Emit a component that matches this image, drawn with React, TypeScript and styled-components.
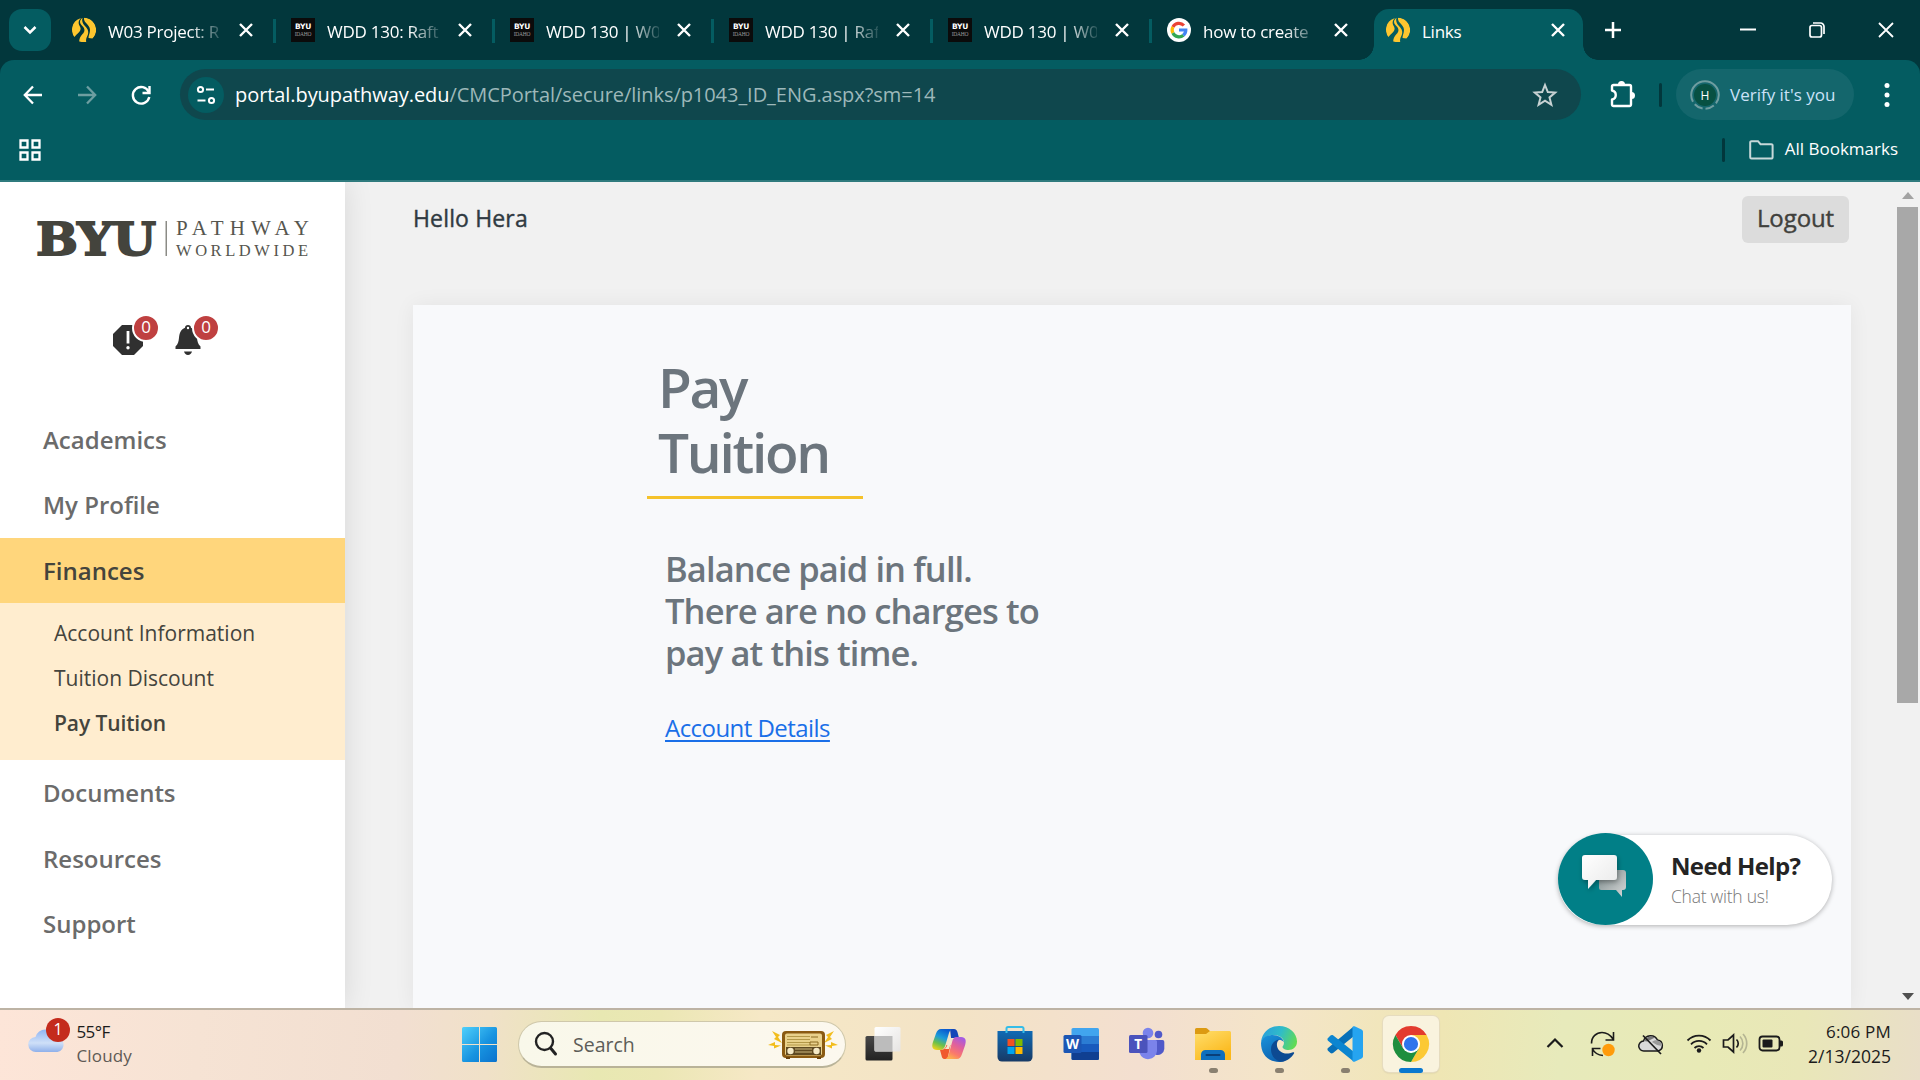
import React from "react";
import styled, { createGlobalStyle } from "styled-components";

const sans = `"Open Sans", "Noto Sans", sans-serif`;

const GlobalStyle = createGlobalStyle`
  * { box-sizing: border-box; }
  body { margin: 0; background: #f1f1f1; font-family: ${sans}; overflow: hidden; }
  svg { display: block; flex: none; overflow: visible; }
`;

const Label = styled.span<{
  $size: number;
  $color: string;
  $spacing?: number;
  $weight?: number;
  $line?: number;
  $left?: number;
  $stroke?: number;
}>`
  font-size: ${(p) => p.$size}px;
  color: ${(p) => p.$color};
  letter-spacing: ${(p) => p.$spacing ?? 0}px;
  font-weight: ${(p) => p.$weight ?? 400};
  line-height: ${(p) => (p.$line ? `${p.$line}px` : "normal")};
  margin-left: ${(p) => p.$left ?? 0}px;
  white-space: nowrap;
  ${(p) => p.$stroke && `-webkit-text-stroke: ${p.$stroke}px ${p.$color};`}
`;

const Screen = styled.div`
  width: 1920px;
  height: 1080px;
  display: flex;
  flex-direction: column;
  overflow: hidden;
`;

/* ---------- Browser chrome ---------- */

const TabStrip = styled.div`
  height: 60px;
  flex: none;
  background: #02373c;
  display: flex;
  padding: 9px 0 0 9px;
`;

const TabSearch = styled.button`
  width: 42px;
  height: 42px;
  margin-right: 9px;
  padding: 0;
  border: 0;
  border-radius: 13px;
  background: #045c61;
  display: grid;
  place-items: center;
`;

const Tab = styled.div<{ $active?: boolean }>`
  position: relative;
  width: ${(p) => (p.$active ? 209 : 219)}px;
  height: 51px;
  padding-left: 12px;
  display: flex;
  align-items: flex-start;
  border-radius: 15px 15px 0 0;
  background: ${(p) => (p.$active ? "#045c61" : "transparent")};
  ${(p) =>
    p.$active &&
    `
    &::before, &::after {
      content: "";
      position: absolute;
      bottom: 0;
      width: 15px;
      height: 15px;
    }
    &::before { left: -15px; background: radial-gradient(circle at 0 0, transparent 14.5px, #045c61 15px); }
    &::after { right: -15px; background: radial-gradient(circle at 100% 0, transparent 14.5px, #045c61 15px); }
  `}
`;

const Favicon = styled.div`
  width: 24px;
  height: 24px;
  margin-top: 9px;
`;

const ByuTile = styled.div`
  width: 24px;
  height: 24px;
  background: #0b0b0b;
  color: #fff;
  display: flex;
  flex-direction: column;
  align-items: center;
  padding-top: 5px;
  font: 900 7.5px/8px "DejaVu Sans", sans-serif;
  letter-spacing: -0.2px;
`;

const ByuTileSub = styled.span`
  font: 400 5.5px/6px "Liberation Serif", serif;
  letter-spacing: -0.2px;
  color: #9a9a9a;
`;

const TabTitle = styled.div<{ $fade: boolean }>`
  width: 113px;
  height: 28px;
  margin: 9px 2px 0 12px;
  overflow: hidden;
  white-space: nowrap;
  font-size: 17px;
  letter-spacing: -0.25px;
  line-height: 28px;
  color: #fff;
  ${(p) => p.$fade && "mask-image: linear-gradient(90deg, #000 82px, transparent 118px);"}
`;

const TabClose = styled.div<{ $active?: boolean }>`
  width: 14px;
  margin: 14px 0 0 ${(p) => (p.$active ? 14 : 16)}px;
`;

const TabDivider = styled.div`
  width: 3px;
  height: 24px;
  margin: 10px 0 0 20px;
  background: #045c61;
`;

const NewTab = styled.div`
  width: 16px;
  margin: 13px 0 0 22px;
`;

const WindowButtons = styled.div`
  display: flex;
  margin: 13px 26px 0 auto;
  gap: 53px;
`;

const Toolbars = styled.div`
  height: 122px;
  flex: none;
  background: #02373c;
`;

const ToolbarSurface = styled.div`
  height: 122px;
  background: #045c61;
  border-radius: 14px 14px 0 0;
  border-bottom: 2px solid #2f7b7e;
`;

const AddressRow = styled.div`
  display: flex;
  align-items: center;
  height: 69px;
  padding: 0 30px 0 21px;
`;

const NavIcons = styled.div`
  display: flex;
  gap: 30px;
  width: 159px;
`;

const Omnibox = styled.div`
  width: 1401px;
  height: 51px;
  border-radius: 26px;
  background: #0f474d;
  display: flex;
  align-items: center;
  padding: 0 23px 0 8px;
`;

const SiteInfo = styled.div`
  width: 36px;
  height: 36px;
  border-radius: 50%;
  background: #045c61;
  display: grid;
  place-items: center;
  margin-right: 11px;
`;

const Extensions = styled.div`
  margin-left: 27px;
`;

const Spacer = styled.div`
  flex: 1;
`;

const VerticalRule = styled.div<{ $left: number; $right: number }>`
  width: 3px;
  height: 24px;
  border-radius: 2px;
  background: #02373c;
  margin: 0 ${(p) => p.$right}px 0 ${(p) => p.$left}px;
`;

const ProfileChip = styled.div`
  width: 178px;
  height: 51px;
  border-radius: 26px;
  background: #14666c;
  display: flex;
  align-items: center;
  padding-left: 14px;
  gap: 10px;
`;

const BookmarkRow = styled.div`
  display: flex;
  align-items: center;
  height: 42px;
  padding: 0 22px 0 19px;
`;

const BookmarksLabel = styled.div`
  margin: 0 0 3px 11px;
  display: flex;
`;

/* ---------- Page ---------- */

const Page = styled.div`
  flex: 1;
  min-height: 0;
  display: flex;
  background: #f1f1f1;
  position: relative;
  overflow: hidden;
`;

const Sidebar = styled.aside`
  width: 345px;
  flex: none;
  background: #fff;
  box-shadow: 0 0 28px rgba(0, 0, 0, 0.11);
  padding-top: 36px;
`;

const LogoSlot = styled.div`
  height: 50px;
  padding-left: 34px;
`;

const Alerts = styled.div`
  display: flex;
  height: 139px;
  padding: 46px 0 0 113px;
  gap: 18px;
`;

const Alert = styled.div`
  position: relative;
  width: 42px;
  padding-top: 11px;
`;

const Badge = styled.span`
  position: absolute;
  left: 19px;
  top: 0;
  width: 28px;
  height: 28px;
  border: 2px solid #fff;
  border-radius: 50%;
  background: #bf4040;
  color: #fff;
  font-size: 17px;
  line-height: 22px;
  text-align: center;
`;

const NavItem = styled.div<{ $active?: boolean }>`
  height: 65.4px;
  padding-left: 43px;
  line-height: 66px;
  font-size: 24px;
  font-weight: 600;
  color: ${(p) => (p.$active ? "#44443d" : "#6b6b6b")};
  background: ${(p) => (p.$active ? "#ffd67c" : "transparent")};
`;

const SubMenu = styled.div`
  height: 157px;
  padding: 8px 0 0 54px;
  background: #ffedcf;
`;

const SubItem = styled.div<{ $active?: boolean }>`
  height: 45px;
  line-height: 45px;
  font-size: 21px;
  font-weight: ${(p) => (p.$active ? 600 : 400)};
  letter-spacing: ${(p) => (p.$active ? -0.1 : 0)}px;
  color: #44443d;
`;

const Main = styled.main`
  flex: 1;
  display: flex;
  flex-direction: column;
  padding: 14px 45px 0 68px;
`;

const Greeting = styled.div`
  display: flex;
  justify-content: space-between;
  height: 47px;
  padding-right: 2px;
  margin-bottom: 62px;
`;

const Logout = styled.button`
  width: 107px;
  height: 47px;
  padding: 0 0 4px;
  border: 0;
  border-radius: 6px;
  background: #dcdcdc;
  font-family: ${sans};
`;

const Panel = styled.section`
  flex: 1;
  background: #f8f9fb;
  box-shadow: 0 0 20px rgba(0, 0, 0, 0.06);
  padding: 49px 0 0 234px;
`;

const Heading = styled.h1`
  width: 216px;
  height: 145px;
  margin: 0 0 49px;
  padding-left: 11px;
  border-bottom: 3px solid #f5c22b;
  font-size: 55px;
  line-height: 65px;
  font-weight: 600;
  letter-spacing: -2.3px;
  color: #6c757d;
`;

const Message = styled.p`
  margin: 0 0 36px 18px;
  font-size: 34.5px;
  line-height: 42px;
  font-weight: 600;
  letter-spacing: -0.88px;
  color: #6c757d;
`;

const MessageLine = styled.span`
  display: block;
  white-space: nowrap;
`;

const DetailsLink = styled.a`
  margin-left: 18px;
  font-size: 24px;
  line-height: 36px;
  letter-spacing: -0.55px;
  color: #1a6fe8;
  text-decoration: underline;
  text-decoration-thickness: 2px;
  text-underline-offset: 3px;
`;

const Scrollbar = styled.div`
  width: 24px;
  display: flex;
  flex-direction: column;
  justify-content: space-between;
  align-items: center;
  padding: 10px 1px 8px 0;
`;

const ScrollThumb = styled.div`
  width: 21px;
  height: 496px;
  margin: 8px 0 auto;
  background: #a8a8a8;
`;

const ChatWidget = styled.div`
  position: absolute;
  left: 1558px;
  top: 653px;
  width: 274px;
  height: 90px;
  display: flex;
  align-items: center;
  border-radius: 45px;
  background: #fff;
  box-shadow: 0 1px 5px rgba(0, 0, 0, 0.3);
`;

const ChatDisc = styled.div`
  width: 95px;
  height: 92px;
  margin: -2px 18px 0 0;
  border-radius: 50%;
  background: #017f87;
  padding: 21px 0 0 23px;
`;

const ChatText = styled.div`
  display: flex;
  flex-direction: column;
  padding-top: 1px;
`;

/* ---------- Taskbar ---------- */

const Taskbar = styled.footer`
  height: 72px;
  flex: none;
  border-top: 2px solid #bdb3a4;
  display: flex;
  background: linear-gradient(
    94deg,
    #fde5d8 0,
    #f6e3d4 200px,
    #f2dfd1 400px,
    #f0e1c8 490px,
    #e8e8b2 600px,
    #ebe7b4 660px,
    #f6e8c6 760px,
    #f3e3c6 960px,
    #f3dfd0 1140px,
    #f4e5c8 1280px,
    #efe6b4 1440px,
    #e7eabb 1560px,
    #e8eab6 1700px,
    #e9e7b8 1800px,
    #e9dec8 1920px
  );
`;

const Weather = styled.div`
  position: relative;
  width: 433px;
  display: flex;
  padding: 18px 0 0 28px;
  gap: 12px;
`;

const WeatherBadge = styled.span`
  position: absolute;
  left: 46px;
  top: 8px;
  width: 24px;
  height: 24px;
  border-radius: 50%;
  background: #c42b1c;
  color: #fff;
  font-size: 16px;
  line-height: 23px;
  text-align: center;
`;

const Stack = styled.div<{ $top: number; $align?: string; $width?: number }>`
  display: flex;
  flex-direction: column;
  align-items: ${(p) => p.$align ?? "flex-start"};
  margin-top: ${(p) => p.$top}px;
  ${(p) => p.$width && `width: ${p.$width}px;`}
`;

const StartSlot = styled.div`
  width: 86px;
  padding: 17px 0 0 29px;
`;

const SearchBox = styled.div`
  width: 328px;
  height: 47px;
  margin: 11px 0 0 -1px;
  border: 1.5px solid #cfc8ab;
  border-bottom: 2px solid #b9b398;
  border-radius: 24px;
  background: linear-gradient(90deg, #f9f8ea, #fcf8ee);
  display: flex;
  align-items: center;
  padding: 0 7px 0 15px;
`;

const Apps = styled.div`
  display: flex;
  margin-left: 4px;
`;

const AppSlot = styled.div`
  width: 66px;
  height: 70px;
  padding: 6px 5px 0;
  display: flex;
  flex-direction: column;
  align-items: center;
`;

const AppTile = styled.div<{ $active?: boolean }>`
  width: 56px;
  height: 56px;
  border-radius: 6px;
  padding-top: 10px;
  display: flex;
  justify-content: center;
  background: ${(p) => (p.$active ? "#f9f3de" : "transparent")};
  box-shadow: ${(p) => (p.$active ? "0 0 0 1px #e6dcbf, 0 1px 2px rgba(0,0,0,.15)" : "none")};
`;

const Indicator = styled.div<{ $wide?: boolean }>`
  width: ${(p) => (p.$wide ? 24 : 9)}px;
  height: 5px;
  margin-top: -4px;
  border-radius: 3px;
  background: ${(p) => (p.$wide ? "#0a78cf" : "#8a8070")};
`;

const Tray = styled.div`
  margin-left: auto;
  display: flex;
  align-items: flex-start;
  padding: 20px 29px 0 0;
`;

const TrayIcon = styled.div<{ $right: number }>`
  margin-right: ${(p) => p.$right}px;
`;

/* ---------- Icons ---------- */

const Pathway = () => (
  <svg width="24" height="24" viewBox="0 0 24 24">
    <clipPath id="disc"><circle cx="12" cy="12" r="12.200" /></clipPath>
    <g clipPath="url(#disc)" fill="#fdc62f">
      <path d="M9.500-.5C3 .5 0 6 0 11.500c0 3.300.8 5.500 2.300 7.500C5 16 8.800 13.500 8.600 10.500 8.400 8 6.300 7 6.700 4c.2-1.500 1.300-3.200 2.800-4.500z" />
      <path d="M10.500-.5C8.500 1.500 7.600 3 8.200 5c.6 2 3.800 3.500 4.200 6.500.4 3-2 4.500-3.400 6.500-1.200 1.800-1.800 3.500-1.800 6h7c-.7-4 1.600-5.500 2-9 .4-3.500-2-5.500-3.700-7.500C10.800 5.500 9.500 3 10.500-.500z" />
      <path d="M12-.5c-.3 3 1 4.500 3 6.500 2.500 2.500 3.500 5 2.800 8-.4 2-1.200 3.500-1.300 6l4 .5c2.200-2 3.700-5 3.700-8.500C24 5 18.500-.5 12-.5z" />
    </g>
  </svg>
);

const Google = () => (
  <svg width="24" height="24" viewBox="0 0 24 24">
    <circle cx="12" cy="12" r="12" fill="#fff" />
    <g fill="none" strokeWidth="3.200">
      <path d="M16.900 7.500A6.800 6.800 0 0 0 5.900 9" stroke="#ea4335" />
      <path d="M5.900 8.900a6.800 6.800 0 0 0 0 6.200" stroke="#fbbc05" />
      <path d="M5.900 15a6.800 6.800 0 0 0 10.500 2.200" stroke="#34a853" />
      <path d="M16.300 17.300A6.800 6.800 0 0 0 18.800 12H12" stroke="#4285f4" />
    </g>
  </svg>
);

const Cross = ({ size = 12, w = 2.4 }: { size?: number; w?: number }) => (
  <svg width={size} height={size} viewBox={`0 0 ${size} ${size}`}>
    <path d={`M1 1L${size - 1} ${size - 1}M${size - 1} 1L1 ${size - 1}`} stroke="#fff" strokeWidth={w} />
  </svg>
);

const Logo = () => (
  <svg width="290" height="50" viewBox="34 218 290 50" fill="#44443d">
    <text x="36" y="255" fontFamily="DejaVu Serif" fontWeight="700" fontSize="45.500" textLength="120" lengthAdjust="spacingAndGlyphs" stroke="#44443d" strokeWidth="1.800">BYU</text>
    <rect x="165.500" y="221" width="1.500" height="35" fill="#8b8b86" />
    <text x="176" y="235.300" fill="#56564f" fontFamily="Liberation Serif" fontSize="21" textLength="133">PATHWAY</text>
    <text x="176" y="256" fill="#56564f" fontFamily="Liberation Serif" fontSize="16.500" textLength="132">WORLDWIDE</text>
  </svg>
);

const ChatBubbles = () => (
  <svg width="48" height="46" viewBox="0 0 48 46">
    <defs>
      <linearGradient id="bubbleBack" x1="0" y1="0" x2="1" y2="1"><stop offset="0.200" stopColor="#8f9c9d" /><stop offset="1" stopColor="#d8d8d8" /></linearGradient>
      <linearGradient id="bubbleFront" x1="0" y1="0" x2="1" y2="1"><stop offset="0" stopColor="#fff" /><stop offset="1" stopColor="#e9e9e9" /></linearGradient>
      <filter id="soft" x="-50%" y="-50%" width="200%" height="200%"><feDropShadow dx="1" dy="2" stdDeviation="2.500" floodOpacity="0.350" /></filter>
    </defs>
    <path d="M21 16h21a3 3 0 0 1 3 3v14a3 3 0 0 1-3 3h-1v7l-6-7H20a2 2 0 0 1-2-2V19z" fill="url(#bubbleBack)" />
    <path filter="url(#soft)" d="M4 1h29a3 3 0 0 1 3 3v19a3 3 0 0 1-3 3H15l-8 9v-9H4a3 3 0 0 1-3-3V4a3 3 0 0 1 3-3z" fill="url(#bubbleFront)" />
  </svg>
);

const Windows = () => (
  <svg width="36" height="36" viewBox="0 0 36 36">
    <linearGradient id="win" gradientUnits="userSpaceOnUse" x1="0" y1="0" x2="36" y2="36"><stop offset="0" stopColor="#4fd0fb" /><stop offset="0.550" stopColor="#1793e0" /><stop offset="1" stopColor="#0a70cc" /></linearGradient>
    <path fill="url(#win)" d="M1.500 0H17v17H0V1.500A1.500 1.500 0 0 1 1.500 0zM18 0H33.500a1.500 1.500 0 0 1 1.500 1.500V17H18zM0 18h17v17H1.500A1.500 1.500 0 0 1 0 33.500zM18 18h17v15.500a1.500 1.500 0 0 1-1.500 1.500H18z" />
  </svg>
);

const Radio = () => (
  <svg width="70" height="32" viewBox="0 0 70 32">
    <g fill="#f2bd1d">
      <path d="M4 3l8 4-2 2 4 6-8-4 2-2zM0 17l7-3v3l6 .5-7 3v-2.500zM66 3l-8 4 2 2-4 6 8-4-2-2zM70 17l-7-3v3l-6 .500 7 3v-2.500z" />
    </g>
    <rect x="14" y="3" width="43" height="27" rx="4" fill="#8a5a12" />
    <path d="M18 29h4v2h-4zM49 29h4v2h-4z" fill="#6b430c" />
    <rect x="17" y="5.500" width="37" height="22" rx="2" fill="#e9d18b" />
    <path d="M19 8.500h23M19 11.500h23M19 14.500h23M19 17h23" stroke="#b39848" strokeWidth="1" />
    <path d="M43 9h7M42 14h8v3h-8z" stroke="#8a6a20" fill="none" strokeWidth="1" />
    <rect x="18" y="19" width="35" height="8" fill="#5f4a22" />
    <path d="M27 21h17M27 24h17" stroke="#a89260" strokeWidth="1.500" />
    <circle cx="22.500" cy="23" r="3.200" fill="#f4e9c6" /><circle cx="48.500" cy="23" r="3.200" fill="#f4e9c6" />
  </svg>
);

const TaskView = () => (
  <svg width="36" height="36" viewBox="0 0 36 36">
    <defs>
      <linearGradient id="tvDark" x1="0" y1="0" x2="0" y2="1"><stop offset="0" stopColor="#484848" /><stop offset="1" stopColor="#222" /></linearGradient>
      <linearGradient id="tvLight" x1="0" y1="0" x2="1" y2="1"><stop offset="0" stopColor="#fff" /><stop offset="1" stopColor="#e6e4e2" /></linearGradient>
    </defs>
    <rect x="0.500" y="10" width="27" height="24.500" rx="1.500" fill="url(#tvDark)" />
    <rect x="9.500" y="1" width="26" height="24.500" rx="1.500" fill="url(#tvLight)" />
    <path d="M9.500 10h18v15.500h-17a1 1 0 0 1-1-1z" fill="#bcbcbc" />
  </svg>
);

const Copilot = () => (
  <svg width="36" height="36" viewBox="0 0 36 36">
    <defs>
      <linearGradient id="cpA" x1="0.600" y1="0" x2="0.200" y2="1"><stop offset="0" stopColor="#0a5bd0" /><stop offset="0.400" stopColor="#1d9cd8" /><stop offset="0.700" stopColor="#6cc04a" /><stop offset="1" stopColor="#f1d21b" /></linearGradient>
      <linearGradient id="cpB" x1="0.800" y1="0" x2="0.300" y2="1"><stop offset="0" stopColor="#a05be8" /><stop offset="0.400" stopColor="#e0609c" /><stop offset="0.750" stopColor="#fb7a6a" /><stop offset="1" stopColor="#fdb04e" /></linearGradient>
    </defs>
    <path d="M19 3h4c2 0 3 1.500 3.600 3.500L28 12h-4c-2 0-3 1-3.600 3z" fill="#1447b8" />
    <path d="M10 3h11c-2 1-2.800 3-3.600 6l-3 10c-1 3.500-2.500 5-5 5H6c-5 0-5.500-4-4-8l3-8.500C6.200 4.500 7.500 3 10 3z" fill="url(#cpA)" />
    <path d="M9 24c3 0 5.500-1 6.500-5h4l-3 14h-3c-2 0-2.500-1.500-3-3.500z" fill="#f0592e" />
    <path d="M26 33H14.500c2-1 2.800-3 3.600-6l3-11c.8-3.500 2-5 4-5H30c5 0 5.500 4 4 8.500L31 28c-1.200 3.500-2.500 5-5 5z" fill="url(#cpB)" />
    <path d="M19 12h4.500c-2 .8-2.800 2.500-3.400 4.500L18 23h-4.500c1.500-.8 2.400-2.500 3-4.500z" fill="#f3e6cd" />
  </svg>
);

const Store = () => (
  <svg width="36" height="36" viewBox="0 0 36 36">
    <linearGradient id="st" x1="0" y1="0" x2="0" y2="1"><stop offset="0" stopColor="#0f6ab4" /><stop offset="1" stopColor="#173a66" /></linearGradient>
    <path d="M9.500 7V2.500A1.500 1.500 0 0 1 11 1h14a1.500 1.500 0 0 1 1.500 1.500V7" fill="none" stroke="#35bde8" strokeWidth="2" />
    <path d="M.5 5h35v26a4.500 4.500 0 0 1-4.500 4.500H5A4.500 4.500 0 0 1 .5 31z" fill="url(#st)" />
    <path d="M9.500 5V7M26.500 5v2" stroke="#35bde8" strokeWidth="2" />
    <path d="M10.500 13h7v7h-7z" fill="#f25022" /><path d="M18.500 13h7v7h-7z" fill="#7fba00" />
    <path d="M10.500 21h7v7h-7z" fill="#00a4ef" /><path d="M18.500 21h7v7h-7z" fill="#ffb900" />
  </svg>
);

const Word = () => (
  <svg width="36" height="36" viewBox="0 0 36 36">
    <rect x="8.500" y="2" width="27.500" height="32" rx="1.500" fill="#41a5ee" />
    <path d="M8.500 10H36v8H8.500z" fill="#2b7cd3" /><path d="M8.500 18H36v8H8.500z" fill="#185abd" />
    <path d="M8.500 26H36v6.500a1.500 1.500 0 0 1-1.500 1.500H10a1.500 1.500 0 0 1-1.500-1.500z" fill="#103f91" />
    <rect x="0.500" y="9" width="18" height="18" rx="1.500" fill="#1b56b4" />
    <text x="9.500" y="23" fill="#fff" fontFamily="Open Sans" fontWeight="700" fontSize="13.500" textAnchor="middle">W</text>
  </svg>
);

const Teams = () => (
  <svg width="36" height="36" viewBox="0 0 36 36">
    <circle cx="29.500" cy="8.500" r="3.800" fill="#5059c9" />
    <path d="M24 14h9.500a1.800 1.800 0 0 1 1.800 1.800V23a6.500 6.500 0 0 1-9 5.500z" fill="#5059c9" />
    <circle cx="19" cy="7" r="5.300" fill="#7b83eb" />
    <path d="M11 14h15.500a1.500 1.500 0 0 1 1.500 1.500V25a9 9 0 0 1-17.500 2z" fill="#7b83eb" />
    <rect x="0" y="9" width="18.500" height="18" rx="1.500" fill="#4b53bc" />
    <text x="9.200" y="23" fill="#fff" fontFamily="Open Sans" fontWeight="700" fontSize="13.500" textAnchor="middle">T</text>
  </svg>
);

const Folder = () => (
  <svg width="36" height="36" viewBox="0 0 36 36">
    <linearGradient id="fo" x1="0" y1="0" x2="0.600" y2="1"><stop offset="0" stopColor="#ffde6c" /><stop offset="1" stopColor="#fbb81b" /></linearGradient>
    <path d="M0 3.500A1.500 1.500 0 0 1 1.500 2H11c1.500 0 3 2.500 4.500 3.500L10 10H0z" fill="#dc9a12" />
    <path d="M0 8h11l4-3h19.500A1.500 1.500 0 0 1 36 6.500V34H0z" fill="url(#fo)" />
    <path d="M6 34v-5.500A4.500 4.500 0 0 1 10.500 24h15a4.500 4.500 0 0 1 4.500 4.500V34z" fill="#0f6fbd" />
    <path d="M11.500 29h13" stroke="#0a3f78" strokeWidth="2" strokeLinecap="round" />
  </svg>
);

const Edge = () => (
  <svg width="36" height="36" viewBox="0 0 36 36">
    <defs>
      <linearGradient id="edTop" x1="0" y1="0.300" x2="1" y2="0.600"><stop offset="0" stopColor="#2a9fdc" /><stop offset="0.500" stopColor="#30bcc8" /><stop offset="1" stopColor="#62db52" /></linearGradient>
      <linearGradient id="edLeft" x1="0" y1="0" x2="0.500" y2="1"><stop offset="0" stopColor="#1a94dc" /><stop offset="1" stopColor="#0d62b0" /></linearGradient>
    </defs>
    <path d="M0 18C0 7 8 0 18 0c10.500 0 18 7.500 18 15.500C36 21 32 24 27.500 24c-3.500 0-6-1.500-6-3 0-1 1.500-1.500 1.500-4.500C23 12 18 9 12.500 9 5 9 0 14 0 18z" fill="url(#edTop)" />
    <path d="M0 17c1-5 5-8 11.500-8 6 0 11 3 11.300 7.500C22 14.500 20 14 18 14c-4 1-5 5-4 9 1.500 6 6.500 9.500 11 11-2 1.500-5 2-7 2C7 36 0 28 0 17z" fill="url(#edLeft)" />
    <path d="M18 13.500c-3 .5-8 3-8 10 0 7 5.500 12 11 12.300 5-.8 9.500-4 12-8.300.5-1-.3-1.500-1-1.200-8.500 3.500-15-.8-16-6.300-.5-3 .5-5 2-6.500z" fill="#0d4a92" />
  </svg>
);

const VsCode = () => (
  <svg width="36" height="36" viewBox="0 0 36 36">
    <path d="M1 22l25-21 1 9L6 27c-.8.700-1.800.600-2.500 0L1 24.700c-.8-.7-.7-2 0-2.700z" fill="#0870b8" />
    <path d="M1 12l2.500-2.500c.7-.7 1.700-.8 2.500-.2L27 26l-1 9L1 14.700c-.8-.7-.7-2 0-2.700z" fill="#0c85d0" />
    <path d="M27.500.300L34.500 3.500c.9.500 1.500 1.200 1.500 2.200v24.600c0 1-.6 1.800-1.500 2.200l-7 3.200c-1 .3-2-.2-2-1.200V1.500c0-1 1-1.500 2-1.200z" fill="#26a4f0" />
  </svg>
);

const Chrome = () => (
  <svg width="36" height="36" viewBox="0 0 36 36">
    <path d="M18 18L2.400 9A18 18 0 0 1 33.600 9z" fill="#e33b2e" />
    <path d="M18 9h15.600A18 18 0 0 1 18 36l7.800-13.500z" fill="#fcc934" />
    <path d="M2.400 9L10.200 22.500 18 18V9z" fill="#e33b2e" />
    <path d="M2.400 9l7.800 13.500L18 27l7.800-4.500L18 36A18 18 0 0 1 2.400 9z" fill="#1e8e3e" />
    <circle cx="18" cy="18" r="9" fill="#fff" /><circle cx="18" cy="18" r="7.100" fill="#2f74ec" />
  </svg>
);

/* ---------- Data ---------- */

const tabs: { title: string; icon: "pathway" | "byu" | "google"; last?: boolean }[] = [
  { title: "W03 Project: R", icon: "pathway" },
  { title: "WDD 130: Raft", icon: "byu" },
  { title: "WDD 130 | W0", icon: "byu" },
  { title: "WDD 130 | Raf", icon: "byu" },
  { title: "WDD 130 | W0", icon: "byu" },
  { title: "how to create", icon: "google", last: true },
];

const apps = [
  { icon: <TaskView /> },
  { icon: <Copilot /> },
  { icon: <Store /> },
  { icon: <Word /> },
  { icon: <Teams /> },
  { icon: <Folder />, open: true },
  { icon: <Edge />, open: true },
  { icon: <VsCode />, open: true },
  { icon: <Chrome />, open: true, active: true },
];

const TabIcon = ({ kind }: { kind: string }) => (
  <Favicon>
    {kind === "pathway" && <Pathway />}
    {kind === "google" && <Google />}
    {kind === "byu" && (
      <ByuTile>
        BYU<ByuTileSub>IDAHO</ByuTileSub>
      </ByuTile>
    )}
  </Favicon>
);

export default function App() {
  return (
    <Screen>
      <GlobalStyle />
      <TabStrip>
        <TabSearch>
          <svg width="14" height="10" viewBox="0 0 14 10"><path d="M1.500 2L7 7.500 12.500 2" fill="none" stroke="#fff" strokeWidth="2.500" /></svg>
        </TabSearch>
        {tabs.map((t, i) => (
          <Tab key={i}>
            <TabIcon kind={t.icon} />
            <TabTitle $fade>{t.title}</TabTitle>
            <TabClose><Cross size={14} /></TabClose>
            {!t.last && <TabDivider />}
          </Tab>
        ))}
        <Tab $active>
          <TabIcon kind="pathway" />
          <TabTitle $fade={false}>Links</TabTitle>
          <TabClose $active><Cross size={14} /></TabClose>
        </Tab>
        <NewTab>
          <svg width="16" height="16" viewBox="0 0 16 16"><path d="M8 0v16M0 8h16" stroke="#fff" strokeWidth="2.500" /></svg>
        </NewTab>
        <WindowButtons>
          <svg width="16" height="16" viewBox="0 0 16 16"><path d="M0 7.500h16" stroke="#fff" strokeWidth="2" /></svg>
          <svg width="16" height="16" viewBox="0 0 16 16"><g fill="none" stroke="#fff" strokeWidth="1.700"><rect x="1" y="3.500" width="11.500" height="11.500" rx="2" /><path d="M4 1h7.500A3.500 3.500 0 0 1 15 4.500V12" /></g></svg>
          <Cross size={16} w={1.8} />
        </WindowButtons>
      </TabStrip>

      <Toolbars>
        <ToolbarSurface>
          <AddressRow>
            <NavIcons>
              <svg width="24" height="24" viewBox="0 0 24 24"><path d="M21 12H4M12 3.500L3.800 12l8.200 8.500" fill="none" stroke="#fff" strokeWidth="2.300" /></svg>
              <svg width="24" height="24" viewBox="0 0 24 24"><path d="M3 12h17M12 3.500l8.200 8.500-8.200 8.500" fill="none" stroke="#6d9ea1" strokeWidth="2.300" /></svg>
              <svg width="24" height="24" viewBox="0 0 24 24"><path d="M19.800 9A8.300 8.300 0 1 0 20.300 14" fill="none" stroke="#fff" strokeWidth="2.400" /><path d="M20.500 3v7h-7" fill="none" stroke="#fff" strokeWidth="2.400" /></svg>
            </NavIcons>
            <Omnibox>
              <SiteInfo>
                <svg width="20" height="20" viewBox="0 0 20 20"><g fill="none" stroke="#fff" strokeWidth="2"><circle cx="4.500" cy="4.500" r="2.600" /><path d="M10 4.500h8M1.500 15.500h8" /><circle cx="15.500" cy="15.500" r="2.600" /></g></svg>
              </SiteInfo>
              <Label $size={20} $color="#fff" $spacing={-0.07}>portal.byupathway.edu</Label>
              <Label $size={20} $color="#9db8ba" $spacing={-0.05}>/CMCPortal/secure/links/p1043_ID_ENG.aspx?sm=14</Label>
              <Spacer />
              <svg width="26" height="26" viewBox="0 0 26 26"><path d="M13 3l2.800 7.100 7.400.5-5.700 4.800 1.900 7.400L13 18.700l-6.400 4.100 1.900-7.400-5.700-4.800 7.400-.5z" fill="none" stroke="#c7d2d3" strokeWidth="2" /></svg>
            </Omnibox>
            <Extensions>
              <svg width="28" height="28" viewBox="0 0 28 28"><path d="M4 9.500V5.500A1.500 1.500 0 0 1 5.500 4h16A1.500 1.500 0 0 1 23 5.500v18a1.500 1.500 0 0 1-1.500 1.500h-16A1.500 1.500 0 0 1 4 23.500v-5c5-1 5-8 0-9z" fill="none" stroke="#fff" strokeWidth="2.400" strokeLinejoin="round" /><path d="M10 3.500a3.500 3.500 0 0 1 7 0zM23.500 11a3.500 3.500 0 0 1 0 7z" fill="#fff" /></svg>
            </Extensions>
            <VerticalRule $left={23} $right={14} />
            <ProfileChip>
              <svg width="30" height="30" viewBox="0 0 30 30"><ellipse cx="15" cy="15" rx="13.800" ry="13.800" fill="none" stroke="#6f9da0" strokeWidth="2" strokeDasharray="9 3 9 3 9 3 50 0" /><circle cx="15" cy="15" r="11" fill="#075042" /><text x="15" y="20" fill="#fff" fontFamily="Open Sans" fontSize="12" textAnchor="middle">H</text></svg>
              <Label $size={17} $color="#cbe2f8">Verify it's you</Label>
            </ProfileChip>
            <Spacer />
            <svg width="6" height="26" viewBox="0 0 6 26" fill="#fff"><circle cx="3" cy="3.500" r="2.500" /><circle cx="3" cy="13" r="2.500" /><circle cx="3" cy="22.500" r="2.500" /></svg>
          </AddressRow>
          <BookmarkRow>
            <svg width="22" height="22" viewBox="0 0 22 22"><path d="M1.500 1.500h7v7h-7zM13.500 1.500h7v7h-7zM1.500 13.500h7v7h-7zM13.500 13.500h7v7h-7z" fill="none" stroke="#fff" strokeWidth="2.300" /></svg>
            <Spacer />
            <VerticalRule $left={0} $right={24} />
            <svg width="25" height="20" viewBox="0 0 25 20"><path d="M2.500 1.200h6.500l2.500 3h10.800a1.300 1.300 0 0 1 1.300 1.300v11.800a1.300 1.300 0 0 1-1.300 1.300H2.500a1.300 1.300 0 0 1-1.300-1.300V2.500a1.300 1.300 0 0 1 1.300-1.300z" fill="none" stroke="#c7d8d9" strokeWidth="2" /></svg>
            <BookmarksLabel>
              <Label $size={17} $color="#fff">All Bookmarks</Label>
            </BookmarksLabel>
          </BookmarkRow>
        </ToolbarSurface>
      </Toolbars>

      <Page>
        <Sidebar>
          <LogoSlot><Logo /></LogoSlot>
          <Alerts>
            <Alert>
              <svg width="30" height="30" viewBox="0 0 30 30"><path d="M9 0h12l9 9v12l-9 9H9l-9-9V9z" fill="#303030" /><path d="M15 6v12.500" stroke="#fff" strokeWidth="2.800" /><circle cx="15" cy="22.800" r="1.700" fill="#fff" /></svg>
              <Badge>0</Badge>
            </Alert>
            <Alert>
              <svg width="30" height="30" viewBox="0 0 30 30"><path d="M15 0a3 3 0 0 1 3 2.800c4 1.600 5.500 5 6 10 .4 4 1 6.500 3.500 8.700V24h-25v-2.500C5 19.300 5.600 16.800 6 12.800c.500-5 2-8.400 6-10A3 3 0 0 1 15 0zM11 26.500h8c-.7 2.300-2 3.500-4 3.500s-3.300-1.200-4-3.500z" fill="#303030" /><circle cx="15" cy="3" r="1.200" fill="#fff" /></svg>
              <Badge>0</Badge>
            </Alert>
          </Alerts>
          <NavItem>Academics</NavItem>
          <NavItem>My Profile</NavItem>
          <NavItem $active>Finances</NavItem>
          <SubMenu>
            <SubItem>Account Information</SubItem>
            <SubItem>Tuition Discount</SubItem>
            <SubItem $active>Pay Tuition</SubItem>
          </SubMenu>
          <NavItem>Documents</NavItem>
          <NavItem>Resources</NavItem>
          <NavItem>Support</NavItem>
        </Sidebar>

        <Main>
          <Greeting>
            <Label $size={23} $color="#303a42" $spacing={0.15} $stroke={0.4} $line={44}>Hello Hera</Label>
            <Logout><Label $size={24} $color="#40403c" $spacing={-0.1} $stroke={0.4}>Logout</Label></Logout>
          </Greeting>
          <Panel>
            <Heading>Pay<br />Tuition</Heading>
            <Message>
              <MessageLine>Balance paid in full.</MessageLine>
              <MessageLine>There are no charges to</MessageLine>
              <MessageLine>pay at this time.</MessageLine>
            </Message>
            <DetailsLink>Account Details</DetailsLink>
          </Panel>
        </Main>

        <Scrollbar>
          <svg width="12" height="7" viewBox="0 0 12 7"><path d="M6 0l6 7H0z" fill="#a3a3a3" /></svg>
          <ScrollThumb />
          <svg width="12" height="7" viewBox="0 0 12 7"><path d="M6 7l6-7H0z" fill="#505050" /></svg>
        </Scrollbar>

        <ChatWidget>
          <ChatDisc><ChatBubbles /></ChatDisc>
          <ChatText>
            <Label $size={24} $weight={700} $color="#242424" $line={32} $spacing={-0.65}>Need Help?</Label>
            <Label $size={17.5} $weight={300} $color="#777" $line={29} $spacing={-0.25}>Chat with us!</Label>
          </ChatText>
        </ChatWidget>
      </Page>

      <Taskbar>
        <Weather>
          <svg width="37" height="24" viewBox="0 0 37 24">
            <linearGradient id="cl" x1="0" y1="0" x2="0" y2="1"><stop offset="0" stopColor="#8fb4f2" /><stop offset="0.600" stopColor="#cfe0f8" /><stop offset="1" stopColor="#8fb0ea" /></linearGradient>
            <path d="M8 24a7.500 7.500 0 0 1-.5-15A10 10 0 0 1 27 9.500a7.300 7.300 0 0 1 2.500 14.500z" fill="url(#cl)" />
          </svg>
          <WeatherBadge>1</WeatherBadge>
          <Stack $top={-8}>
            <Label $size={17} $color="#1b1b1b" $line={24} $left={-0.5} $spacing={-0.6}>55°F</Label>
            <Label $size={17} $color="#5f5a55" $line={24} $left={-0.5} $spacing={0.15}>Cloudy</Label>
          </Stack>
        </Weather>
        <StartSlot><Windows /></StartSlot>
        <SearchBox>
          <svg width="24" height="26" viewBox="0 0 24 26"><circle cx="10.500" cy="10.500" r="8.500" fill="none" stroke="#222" strokeWidth="2.400" /><path d="M16.500 17l5 6" stroke="#222" strokeWidth="3" strokeLinecap="round" /></svg>
          <Label $left={15} $size={19.5} $color="#5d5d58">Search</Label>
          <Spacer />
          <Radio />
        </SearchBox>
        <Apps>
          {apps.map((a, i) => (
            <AppSlot key={i}>
              <AppTile $active={a.active}>{a.icon}</AppTile>
              {a.open && <Indicator $wide={a.active} />}
            </AppSlot>
          ))}
        </Apps>
        <Tray>
          <TrayIcon $right={26}>
            <svg width="18" height="26" viewBox="0 0 18 26"><path d="M1.500 17L9 9.500l7.500 7.500" fill="none" stroke="#1b1b1b" strokeWidth="2.200" /></svg>
          </TrayIcon>
          <TrayIcon $right={22}>
            <svg width="26" height="28" viewBox="0 0 26 28"><g fill="none" stroke="#1b1b1b" strokeWidth="1.600"><path d="M1.500 13.500C1.500 6.500 6.500 2.500 12 2.500c4.500 0 8 2 11 6.500M23.500 2v8h-8M13 25.500C8 25 4.500 23 2.500 19M2.500 26v-7.500h8" /></g><circle cx="18.500" cy="20" r="6.200" fill="#ff9b0a" /></svg>
          </TrayIcon>
          <TrayIcon $right={22}>
            <svg width="26" height="26" viewBox="0 0 26 26"><path d="M6 21a5 5 0 0 1-.5-10A7.500 7.500 0 0 1 19.500 10a5.600 5.600 0 0 1 .5 11z" fill="#d9d9d9" stroke="#1b1b1b" strokeWidth="1.500" /><path d="M6 11c2-4 7-6 11-3.500l-8 4z" fill="#777" /><path d="M14 12c3-3 8-2 10 2v2l-5-1z" fill="#9a9a9a" /><path d="M5 5.500L23 24" stroke="#1b1b1b" strokeWidth="1.700" /></svg>
          </TrayIcon>
          <TrayIcon $right={10}>
            <svg width="26" height="26" viewBox="0 0 26 26"><g fill="none" stroke="#1b1b1b" strokeWidth="1.800"><path d="M1.500 10.500a16 16 0 0 1 23 0M5 14.300a11 11 0 0 1 16 0M8.500 18a6.300 6.300 0 0 1 9 0" /></g><circle cx="13" cy="20.500" r="2.200" fill="#1b1b1b" /></svg>
          </TrayIcon>
          <TrayIcon $right={10}>
            <svg width="26" height="26" viewBox="0 0 26 26"><g fill="none" stroke="#1b1b1b" strokeWidth="1.700"><path d="M1.500 10h4.500l5.500-5v17L6 17H1.500z" /><path d="M14.500 9.500a5.500 5.500 0 0 1 0 8" /><path d="M18 6.500a10 10 0 0 1 0 14M21 4a14 14 0 0 1 0 19" stroke="#b5b593" /></g></svg>
          </TrayIcon>
          <TrayIcon $right={0}>
            <svg width="26" height="26" viewBox="0 0 26 26"><rect x="1.500" y="6.500" width="20" height="14" rx="3" fill="none" stroke="#1b1b1b" strokeWidth="1.800" /><rect x="4.500" y="9.500" width="10" height="8" rx="1" fill="#1b1b1b" /><path d="M22 10.500h1.500a1.500 1.500 0 0 1 1.500 1.500v3a1.500 1.500 0 0 1-1.500 1.500H22z" fill="#1b1b1b" /></svg>
          </TrayIcon>
          <Stack $top={-10} $align="flex-end" $width={107}>
            <Label $size={17} $color="#1b1b1b" $line={24} $spacing={0.2}>6:06 PM</Label>
            <Label $size={17.5} $color="#1b1b1b" $line={24} $spacing={0}>2/13/2025</Label>
          </Stack>
        </Tray>
      </Taskbar>
    </Screen>
  );
}
